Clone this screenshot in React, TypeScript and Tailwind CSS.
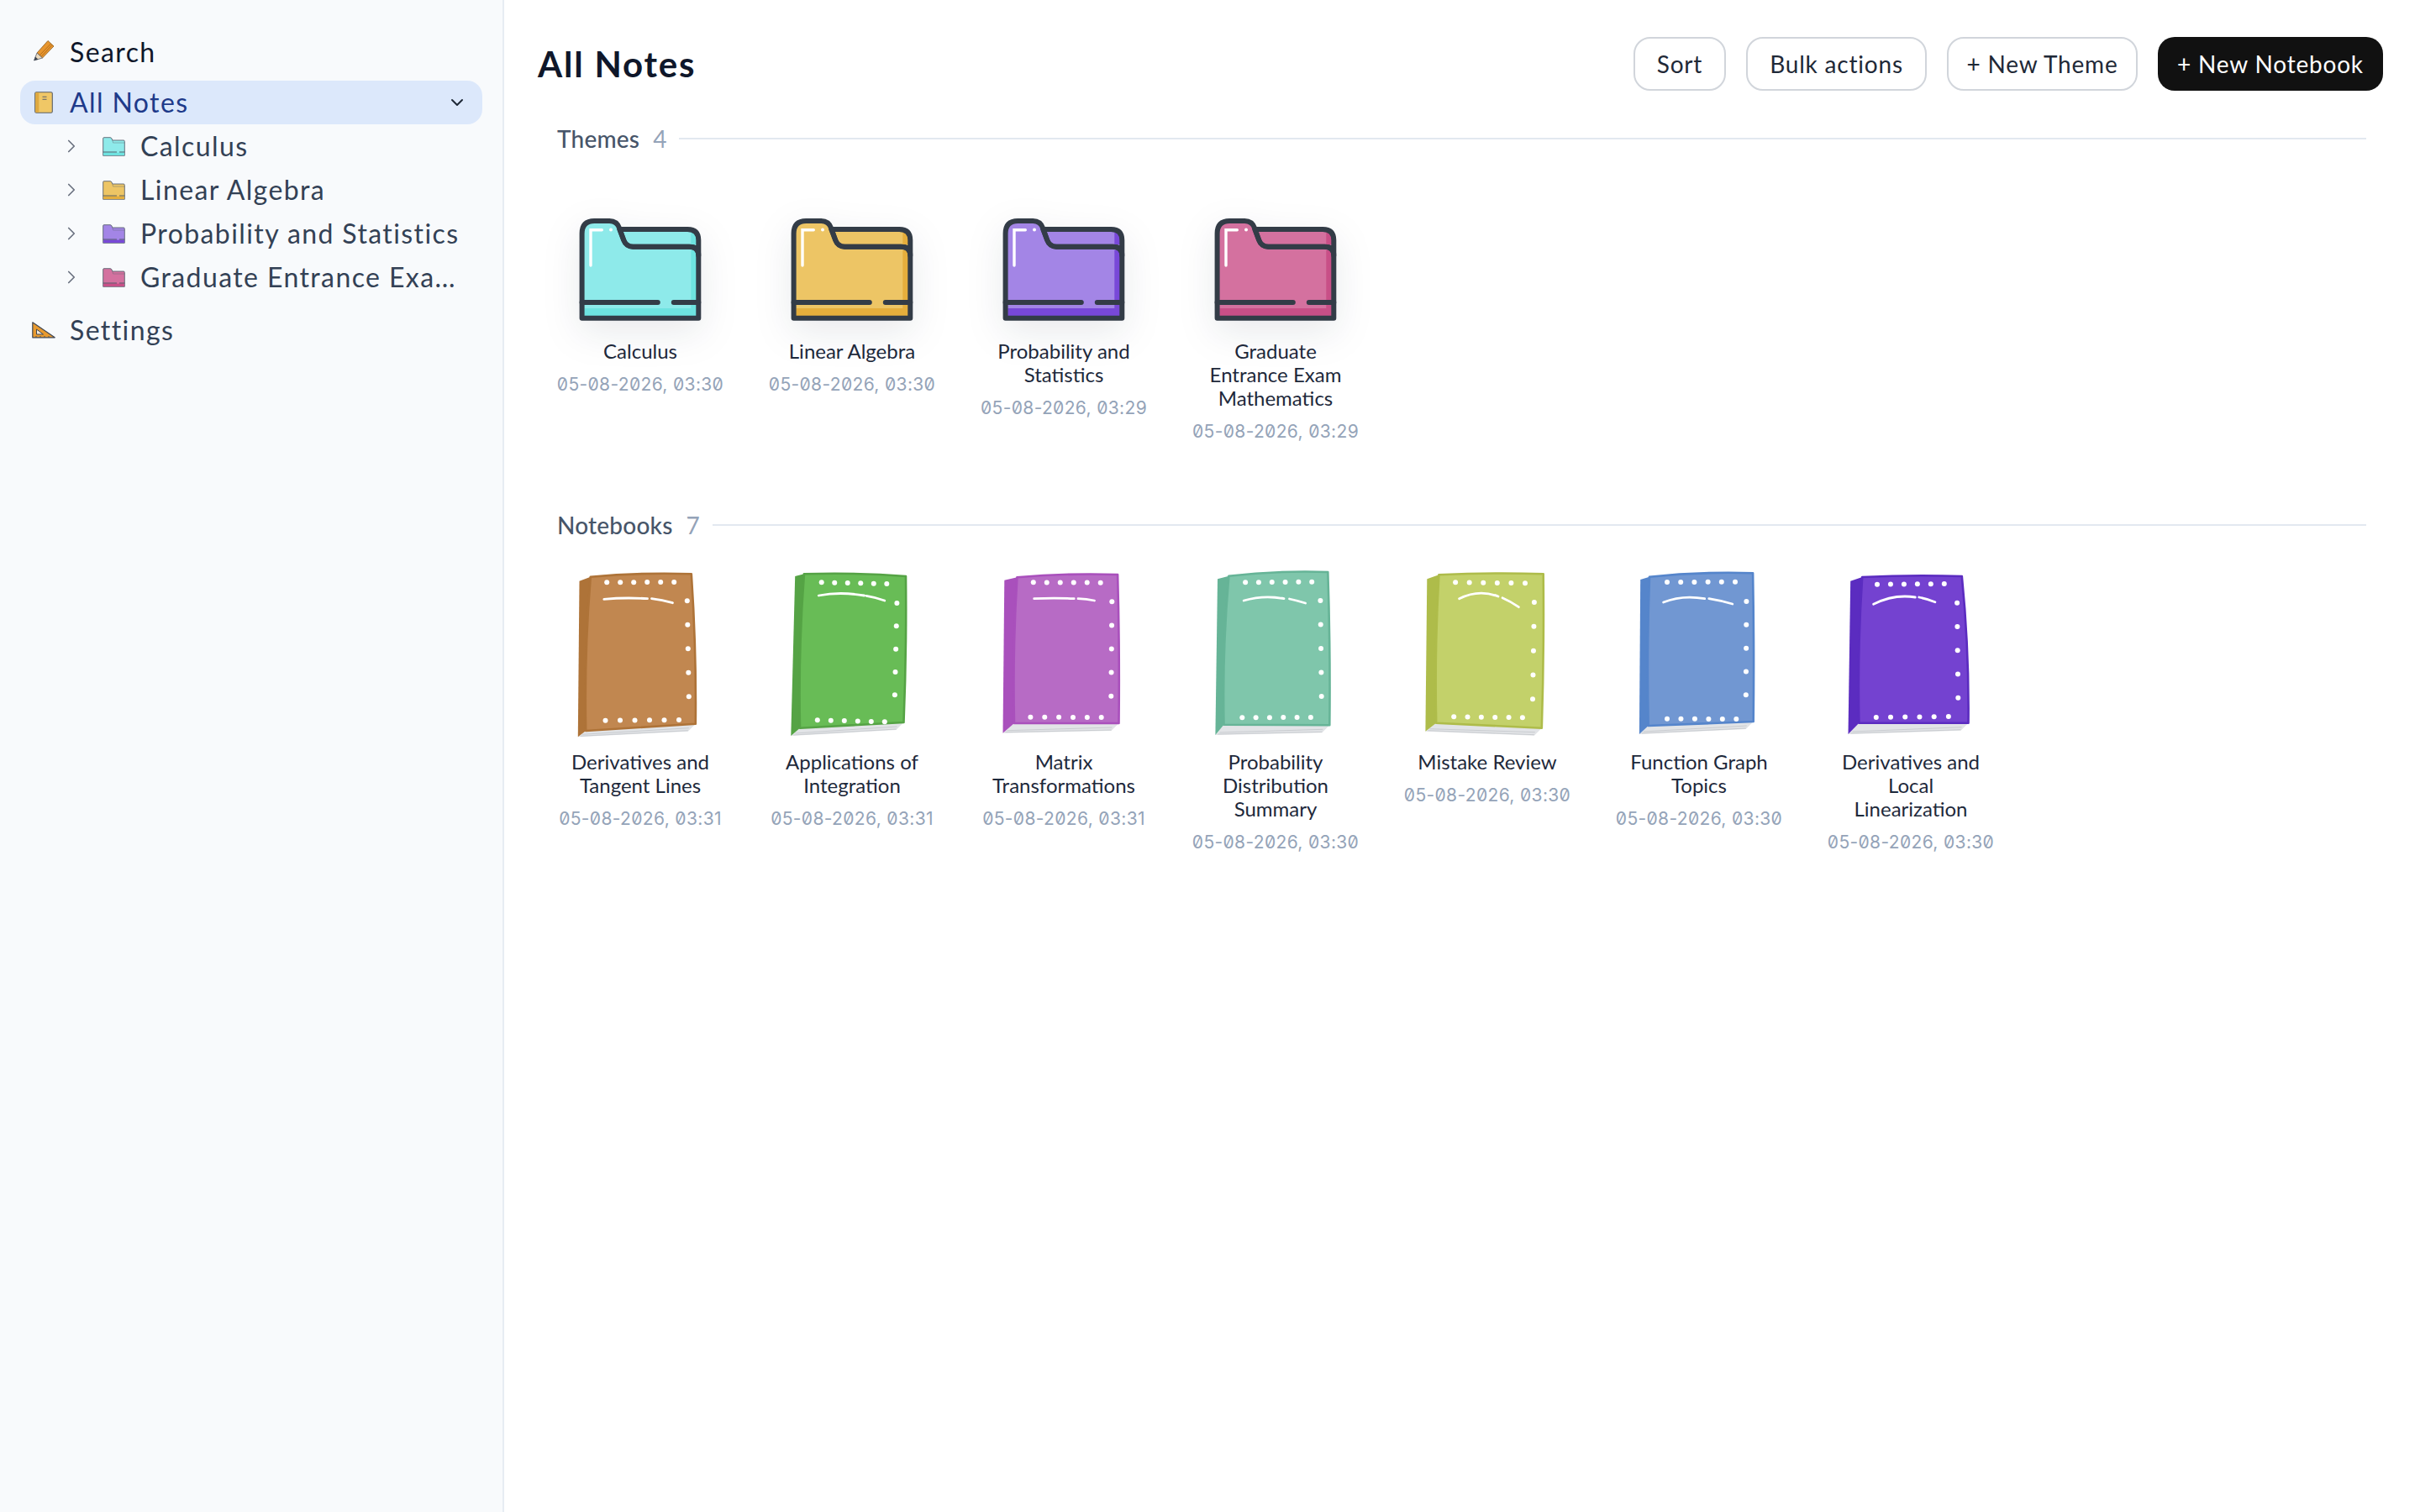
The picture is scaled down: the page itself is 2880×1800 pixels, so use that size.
import { ChevronDown, ChevronRight } from 'lucide-react';

type Pt = [number, number];

interface ThemeItem {
  name: string;
  date: string;
  base: string;
  dark: string;
}

interface NotebookItem {
  name: string;
  date: string;
  cover: string;
  edge: string;
  tl: Pt;
  tr: Pt;
  br: Pt;
  bl: Pt;
  st: Pt;
  sb: Pt;
  top: [Pt, Pt];
  bottom: [Pt, Pt];
  right: [Pt, Pt];
  shine: string[];
}

const themes: ThemeItem[] = [
  { name: 'Calculus', date: '05-08-2026, 03:30', base: '#8eeaea', dark: '#6ee3e0' },
  { name: 'Linear Algebra', date: '05-08-2026, 03:30', base: '#edc565', dark: '#e5ae3c' },
  { name: 'Probability and\nStatistics', date: '05-08-2026, 03:29', base: '#a385e6', dark: '#7848d8' },
  { name: 'Graduate\nEntrance Exam\nMathematics', date: '05-08-2026, 03:29', base: '#d4719f', dark: '#c84f87' },
];

const notebooks: NotebookItem[] = [
  {
    name: 'Derivatives and\nTangent Lines', date: '05-08-2026, 03:31', cover: '#c18750', edge: '#ae7338',
    tl: [20.8, 10.7], tr: [140.8, 7.3], br: [145.8, 185.7], bl: [15.2, 194], st: [7.5, 15.7], sb: [5.8, 201.3],
    top: [[40.2, 17.3], [120.2, 17]], bottom: [[38.5, 181.7], [126, 181]], right: [[135.8, 39.3], [137.8, 153.3]],
    shine: ['M36.8 37.3Q62 35 88.5 36.7', 'M93.5 36.7Q106 38 118.5 41.7'],
  },
  {
    name: 'Applications of\nIntegration', date: '05-08-2026, 03:31', cover: '#68bc56', edge: '#55a345',
    tl: [22.9, 7.3], tr: [144, 10], br: [141.5, 184], bl: [18, 190.7], st: [12.2, 10], sb: [7.3, 200],
    top: [[43.7, 17.3], [121.3, 19]], bottom: [[38.8, 181.3], [118.8, 183.3]], right: [[133.4, 42], [130.9, 151.3]],
    shine: ['M40.3 33Q65.5 28 94.6 33', 'M97 33.3Q108 35 118.8 39'],
  },
  {
    name: 'Matrix\nTransformations', date: '05-08-2026, 03:31', cover: '#b76bc5', edge: '#a950bc',
    tl: [24.4, 11.3], tr: [144.1, 8], br: [145.5, 185], bl: [21, 185], st: [9.3, 14.7], sb: [7.5, 196.7],
    top: [[43.8, 17.3], [123.7, 17.7]], bottom: [[40.4, 177.7], [124.7, 178]], right: [[137.3, 40.3], [136.3, 152.7]],
    shine: ['M44.7 36.7Q68 35.5 92.2 36.7', 'M97 36.7Q107 37 116.5 39'],
  },
  {
    name: 'Probability\nDistribution\nSummary', date: '05-08-2026, 03:30', cover: '#7fc6ab', edge: '#66b497',
    tl: [24.4, 9.7], tr: [142.3, 5], br: [144.3, 187.3], bl: [18.5, 186.7], st: [11, 13.3], sb: [8.4, 199],
    top: [[44.1, 17.3], [123.2, 16.7]], bottom: [[40.3, 178.3], [121.9, 178]], right: [[133.4, 39], [134.7, 153]],
    shine: ['M42.2 39Q66 32 90 36.7', 'M96.5 37Q106 39 115.6 42'],
  },
  {
    name: 'Mistake Review', date: '05-08-2026, 03:30', cover: '#c3d16a', edge: '#aebc4a',
    tl: [22.4, 8.3], tr: [146.7, 7.3], br: [144.8, 190.7], bl: [19.2, 184.7], st: [8.3, 13.3], sb: [6.4, 194.7],
    top: [[42.1, 17.3], [125, 18.3]], bottom: [[40.2, 177.3], [121.9, 178.3]], right: [[135.9, 41], [134, 156.3]],
    shine: ['M46.6 36.7Q70 25 93 34', 'M98 35.7Q108 40 117.4 46.7'],
  },
  {
    name: 'Function Graph\nTopics', date: '05-08-2026, 03:30', cover: '#7197d2', edge: '#5585cb',
    tl: [21, 10.7], tr: [144.1, 6.3], br: [144.7, 183], bl: [19.7, 188], st: [10.2, 14], sb: [8.9, 198],
    top: [[42, 17], [123, 16.7]], bottom: [[42, 179.7], [124.3, 180]], right: [[136.4, 40], [135.8, 151.3]],
    shine: ['M37.6 41Q60 32 86.7 36.7', 'M91.8 36.7Q106 39 119.8 43'],
  },
  {
    name: 'Derivatives and\nLocal\nLinearization', date: '05-08-2026, 03:30', cover: '#7442d0', edge: '#5b2cc0',
    tl: [22.2, 11], tr: [140.8, 10], br: [148.5, 184.7], bl: [18.4, 184.7], st: [8.2, 15.7], sb: [5.5, 198],
    top: [[40, 19.7], [119.8, 19]], bottom: [[38.8, 178], [124.9, 177]], right: [[135.1, 41.7], [136.3, 154.7]],
    shine: ['M35.6 43.3Q60 31 85.3 35', 'M89.8 35Q100 37 108.9 40.7'],
  },
];

function lerpRow(a: Pt, b: Pt, n: number): Pt[] {
  return Array.from({ length: n }, (_, i) => {
    const t = i / (n - 1);
    return [a[0] + (b[0] - a[0]) * t, a[1] + (b[1] - a[1]) * t] as Pt;
  });
}

function FolderArt({ base, dark }: { base: string; dark: string }) {
  const outline = 'M22.3 128.7V28Q22.3 13 37 13H55Q64 13 67 22L72 36Q75 43.7 83 43.7H150Q161 43.7 161 54V128.7Z';
  const back = 'M67 23H148Q161 23 161 36V54Q161 43.7 150 43.7H83Q75 43.7 72 36Z';
  return (
    <svg
      width="180"
      height="140"
      viewBox="1.7 0 180 140"
      className="shrink-0 drop-shadow-[0_14px_22px_rgba(15,23,42,0.09)]"
    >
      <path d={back} fill={base} />
      <path d={outline} fill={base} />
      {/* darker right side and bottom band */}
      <rect x="152" y="48" width="7" height="78" fill={dark} />
      <rect x="152" y="26" width="7" height="15" fill={dark} />
      <rect x="25" y="117" width="133" height="10" fill={dark} />
      {/* outline */}
      <path d={back} fill="none" stroke="#333c47" strokeWidth="6" strokeLinejoin="round" />
      <path d={outline} fill="none" stroke="#333c47" strokeWidth="6" strokeLinejoin="round" />
      <path d="M22.3 110H112.5M131.5 110H161" stroke="#333c47" strokeWidth="6" strokeLinecap="round" />
      {/* shine */}
      <path d="M32.7 66V23.8H46" fill="none" stroke="#ffffff" strokeWidth="3.4" strokeLinecap="round" />
      <circle cx="56.7" cy="23.5" r="2" fill="#ffffff" />
    </svg>
  );
}

function NotebookArt({ item }: { item: NotebookItem }) {
  const { tl, tr, br, bl, st, sb } = item;
  const midTop = (tl[0] + tr[0]) / 2;
  const topArc = Math.min(tl[1], tr[1]) - 2;
  const midRight = Math.max(tr[0], br[0]) + 1;
  const coverPath = `M${tl[0]} ${tl[1]}Q${midTop} ${topArc} ${tr[0]} ${tr[1]}Q${midRight} ${(tr[1] + br[1]) / 2} ${br[0]} ${br[1]}L${bl[0]} ${bl[1]}Q${bl[0] - 2} ${(tl[1] + bl[1]) / 2} ${tl[0]} ${tl[1]}Z`;
  const dots = [
    ...lerpRow(item.top[0], item.top[1], 6),
    ...lerpRow(item.bottom[0], item.bottom[1], 6),
    ...lerpRow(item.right[0], item.right[1], 5),
  ];
  return (
    <svg width="160" height="210" viewBox="0 0 160 210" className="shrink-0">
      {/* page block */}
      <path d={`M${sb[0]} ${sb[1]}L${bl[0]} ${bl[1]}L${br[0]} ${br[1]}L${br[0] - 9} ${br[1] + 9}Z`} fill="#e2e4e7" />
      <path
        d={`M${sb[0] + 5} ${sb[1] - 3}L${br[0] - 8} ${br[1] + 5}M${sb[0] + 3} ${sb[1] - 1}L${br[0] - 9} ${br[1] + 8}`}
        stroke="#c9ccd0"
        strokeWidth="1"
        fill="none"
      />
      {/* spine */}
      <path d={`M${st[0]} ${st[1]}L${tl[0]} ${tl[1]}L${bl[0]} ${bl[1]}L${sb[0]} ${sb[1]}Z`} fill={item.edge} />
      {/* cover */}
      <path d={coverPath} fill={item.cover} stroke={item.edge} strokeWidth="2.6" strokeLinejoin="round" />
      {item.shine.map((d) => (
        <path key={d} d={d} fill="none" stroke="#ffffff" strokeWidth="2.8" strokeLinecap="round" />
      ))}
      {dots.map(([x, y]) => (
        <circle key={`${x}-${y}`} cx={x} cy={y} r="3" fill="#ffffff" />
      ))}
    </svg>
  );
}

function MiniFolder({ base, dark }: { base: string; dark: string }) {
  return (
    <svg width="27" height="23" viewBox="0 0 27 23" className="shrink-0">
      <path d="M.7 22.3V1.7Q.7.7 1.7.7H9Q10.5.7 11 2L11.8 4H25Q26.3 4 26.3 5.3V22.3Z" fill={base} stroke="#5b6472" strokeWidth=".9" />
      <path d="M11.8 4L12.6 7H26.3" fill="none" stroke="#5b6472" strokeWidth=".7" strokeOpacity=".6" />
      <rect x="1.2" y="18.6" width="24.6" height="3.3" fill={dark} />
      <path d="M.7 18H17M20 18H26.3" stroke="#4b5563" strokeWidth=".9" />
    </svg>
  );
}

function PencilIcon() {
  return (
    <svg width="28" height="28" viewBox="0 3 28 28" className="shrink-0 overflow-visible">
      <path d="M6 18L19 3.5L26 10L12.5 24Z" fill="#e8962f" stroke="#8a5a1e" strokeWidth=".8" strokeLinejoin="round" />
      <path d="M9 21L22.5 7M11 22.5L24 8.5" stroke="#b56f1c" strokeWidth="1" />
      <path d="M6 18L12.5 24L2.5 27Z" fill="#ead9bd" stroke="#59606b" strokeWidth=".8" strokeLinejoin="round" />
      <path d="M4 22.5L7.5 25.7L2.5 27Z" fill="#3d4552" />
    </svg>
  );
}

function BookIcon() {
  return (
    <svg width="22" height="26" viewBox="0 0 22 26" className="shrink-0">
      <rect x=".7" y=".7" width="20.6" height="24.6" rx="1.6" fill="#f0c766" stroke="#59606b" strokeWidth="1.1" />
      <rect x="1.3" y="1.3" width="4" height="23.4" fill="#dfa93f" />
      <path d="M9.5 6.3H14.5M9.5 9.3H14.5" stroke="#59606b" strokeWidth="1.1" />
    </svg>
  );
}

function RulerIcon() {
  return (
    <svg width="28" height="20" viewBox="0 0 28 20" className="shrink-0">
      <path d="M.8.8V18.8H27.2Z" fill="#e89a2f" stroke="#3f4754" strokeWidth="1.2" strokeLinejoin="round" />
      <path d="M5.5 9V15H13.5Z" fill="#f3e9da" stroke="#3f4754" strokeWidth="1" strokeLinejoin="round" />
      <path d="M5 18.5V17M10 18.5V17M15 18.5V17M20 18.5V17" stroke="#3f4754" strokeWidth=".9" />
    </svg>
  );
}

function SectionHeader({ title, count, lineGap }: { title: string; count: number; lineGap: string }) {
  return (
    <div className="flex h-9 items-center">
      <span className="pl-px text-[28px] font-medium tracking-[0.2px] text-[#475569]">{title}</span>
      <span className="ml-4 text-[28px] text-[#94a3b8]">{count}</span>
      <div className={`h-0.5 flex-1 bg-[#e2e8f0] ${lineGap}`} />
    </div>
  );
}

function Caption({ name, date }: { name: string; date: string }) {
  return (
    <>
      <div className="whitespace-pre-line text-center text-[24px] leading-7 text-[#1e293b]">{name}</div>
      <div className="mt-3 text-center font-['Inter',sans-serif] text-[21px] leading-7 tracking-[0.35px] text-[#94a3b8] slashed-zero">
        {date}
      </div>
    </>
  );
}

export default function App() {
  return (
    <div className="flex h-screen w-full overflow-hidden bg-white font-['Lato',sans-serif]">
      {/* Sidebar */}
      <aside className="flex w-[600px] shrink-0 flex-col border-r-2 border-[#e7ecf3] bg-[#f8fafc] pl-6 pr-6 pt-9 text-[32px] tracking-[1.4px]">
        <div className="flex h-[52px] items-center pl-[14px] text-[#0f172a]">
          <span className="flex w-[45px] items-center">
            <PencilIcon />
          </span>
          Search
        </div>
        <div className="mt-2 flex h-[52px] items-center rounded-[18px] bg-[#dce8fb] pl-[17px] pr-[18px] text-[#1e3a8a]">
          <span className="flex w-[42px] items-center">
            <BookIcon />
          </span>
          <span className="flex-1">All Notes</span>
          <ChevronDown size={24} strokeWidth={2} className="text-[#1f2937]" />
        </div>
        {themes.map((t) => (
          <div key={t.name} className="flex h-[52px] items-center pl-[48px] pr-4 text-[#334155]">
            <ChevronRight size={26} strokeWidth={1.6} className="shrink-0 text-[#6b7280]" />
            <span className="ml-[24px] flex">
              <MiniFolder base={t.base} dark={t.dark} />
            </span>
            <span className="ml-[18px] min-w-0 flex-1 truncate">{t.name.replace(/\n/g, ' ')}</span>
          </div>
        ))}
        <div className="mt-[11px] flex h-[52px] items-center pl-[14px] text-[#334155]">
          <span className="flex w-[45px] items-center">
            <RulerIcon />
          </span>
          Settings
        </div>
      </aside>

      {/* Main */}
      <main className="min-w-0 flex-1 pl-10 pr-11 pt-11">
        <header className="flex h-16 items-center justify-between">
          <h1 className="text-[42px] font-bold tracking-[1.8px] text-[#0f172a]">All Notes</h1>
          <div className="flex items-center gap-6 text-[28px] tracking-[0.8px]">
            <button className="h-16 w-[110px] rounded-[20px] border-2 border-[#d1d5db] bg-white text-[#1f2937]">Sort</button>
            <button className="h-16 w-[215px] rounded-[20px] border-2 border-[#d1d5db] bg-white text-[#1f2937]">Bulk actions</button>
            <button className="h-16 w-[227px] rounded-[20px] border-2 border-[#d1d5db] bg-white text-[#1f2937]">+ New Theme</button>
            <button className="h-16 w-[268px] rounded-[20px] bg-[#111111] text-white">+ New Notebook</button>
          </div>
        </header>

        <section className="ml-[22px] mr-5 mt-[39px]">
          <SectionHeader title="Themes" count={themes.length} lineGap="ml-[15px]" />
          <div className="mt-[67px] flex flex-wrap gap-[52px]">
            {themes.map((t) => (
              <div key={t.name} className="flex w-[200px] flex-col items-center">
                <FolderArt base={t.base} dark={t.dark} />
                <div className="mt-[14px] w-full">
                  <Caption name={t.name} date={t.date} />
                </div>
              </div>
            ))}
          </div>
        </section>

        <section className="ml-[22px] mr-5 mt-[79px]">
          <SectionHeader title="Notebooks" count={notebooks.length} lineGap="ml-[15px]" />
          <div className="mt-[33px] flex flex-wrap gap-[52px]">
            {notebooks.map((n) => (
              <div key={n.name} className="flex w-[200px] flex-col items-center">
                <NotebookArt item={n} />
                <div className="mt-[7px] w-full">
                  <Caption name={n.name} date={n.date} />
                </div>
              </div>
            ))}
          </div>
        </section>
      </main>
    </div>
  );
}
